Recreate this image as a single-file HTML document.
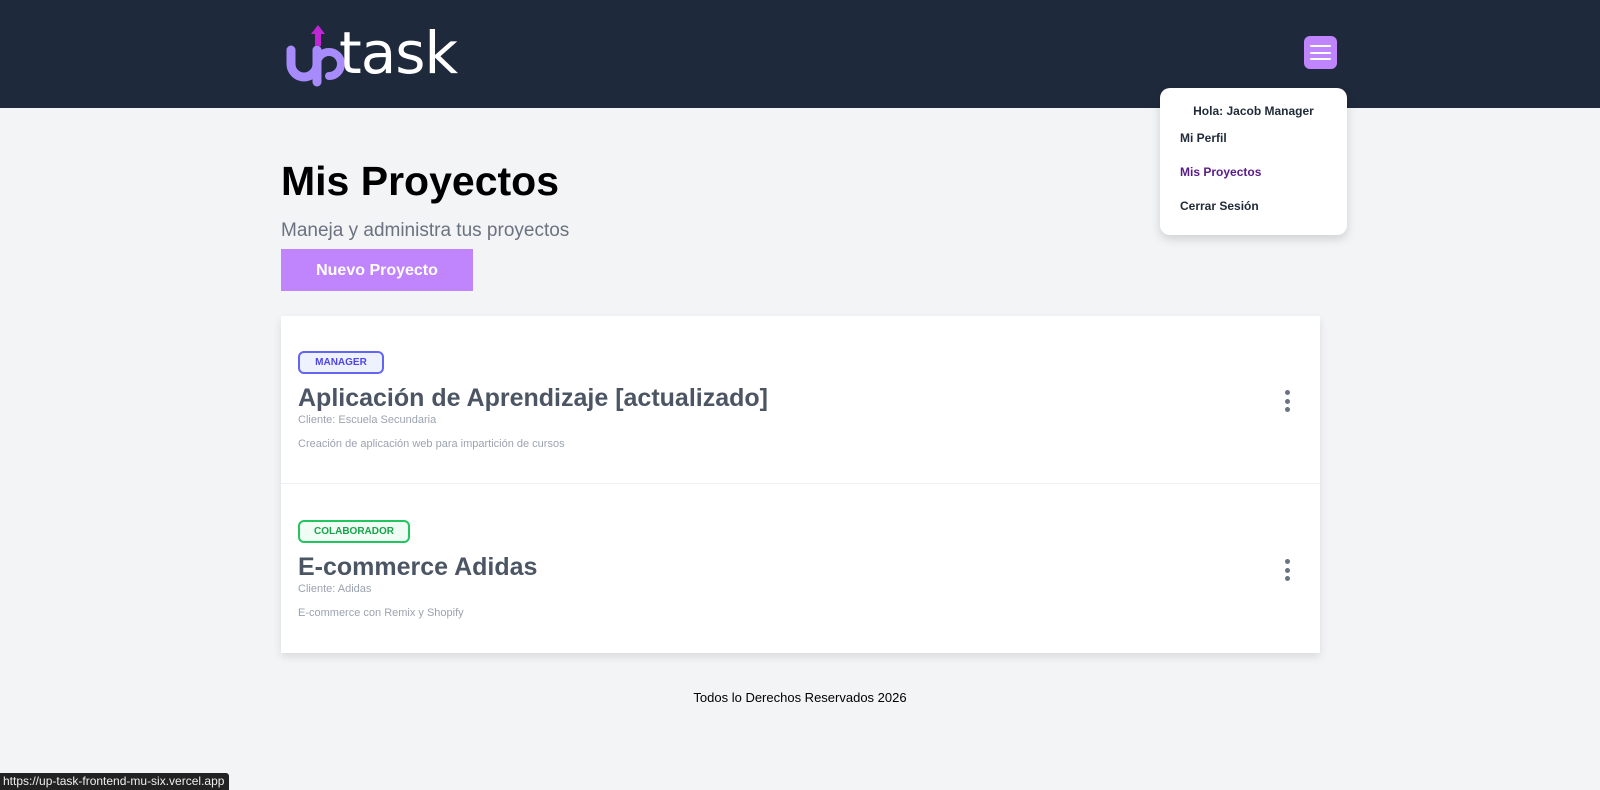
<!DOCTYPE html>
<html><head><meta charset="utf-8">
<style>
*{box-sizing:border-box;margin:0;padding:0}
body{width:1600px;height:790px;overflow:hidden;background:#f3f4f6;font-family:"Liberation Sans","DejaVu Sans",sans-serif;position:relative}
header{position:absolute;left:0;top:0;width:1600px;height:108px;background:#1e293b}
.logo{position:absolute;left:285px;top:22px}
.hb{position:absolute;left:1304px;top:36px;width:33px;height:33px;background:#c084fc;border-radius:6px}
.hb i{position:absolute;left:6px;width:21px;height:2px;background:#fff;border-radius:1px}
.menu{position:absolute;left:1160px;top:88px;width:187px;height:147px;background:#fff;border-radius:10px;box-shadow:0 4px 10px rgba(0,0,0,.15);font-size:12px;font-weight:bold;color:#1f2937}
.menu div{position:absolute;left:20px}
h1{position:absolute;left:281px;top:158px;font-size:41px;font-weight:900;color:#000;letter-spacing:0}
.sub{position:absolute;left:281px;top:220px;font-size:19px;font-weight:300;color:#6b7280}
.btn{position:absolute;left:281px;top:249px;width:192px;height:42px;background:#c084fc;color:#fff;font-weight:bold;font-size:16px;text-align:center;line-height:44px}
.card{position:absolute;left:281px;top:316px;width:1039px;height:337px;background:#fff;box-shadow:0 4px 8px rgba(0,0,0,.1)}
.item{position:absolute;left:0;width:1039px;height:168px}
.badge{position:absolute;left:17px;height:23px;border:2px solid;border-radius:6px;font-size:10px;font-weight:bold;text-align:center;line-height:19px}
.t{position:absolute;left:17px;font-size:25px;font-weight:bold;color:#4b5563}
.c{position:absolute;left:17px;font-size:11px;color:#9ca3af}
.d{position:absolute;left:17px;font-size:11px;color:#9ca3af}
.dots{position:absolute;left:1004px;width:6px}
.dots i{display:block;width:5px;height:5px;border-radius:50%;background:#6b7280;margin-bottom:3.5px}
.foot{position:absolute;left:0;width:1600px;top:690px;text-align:center;font-size:13px;color:#000}
.status{position:absolute;left:0;top:773px;width:229px;height:17px;background:#222;color:#eee;font-size:12px;line-height:17px;padding-left:3px;border-top-right-radius:3px}
</style></head><body>
<header>
<div class="logo">
<svg width="180" height="66" viewBox="0 0 180 66">
<path d="M6 28 V42 a13 13 0 0 0 26 0 V28" fill="none" stroke="#a78bfa" stroke-width="9" stroke-linecap="round"/>
<path d="M32 42 V60" stroke="#a78bfa" stroke-width="9" stroke-linecap="round"/>
<path d="M32 42 a12 12 0 1 1 12 12" fill="none" stroke="#a78bfa" stroke-width="8" stroke-linecap="round"/>
<path d="M26 12 L33 3 L40 12 H36 V24 H30 V12 Z" fill="#c026d3"/>
<text x="54" y="51" font-family="DejaVu Sans,sans-serif" font-size="58" fill="#fff" letter-spacing="-1">task</text>
</svg>
</div>
<div class="hb"><i style="top:9px"></i><i style="top:15.5px"></i><i style="top:22px"></i></div>
</header>
<div class="menu">
<div style="left:0;width:187px;text-align:center;top:16px">Hola: Jacob Manager</div>
<div style="top:43px">Mi Perfil</div>
<div style="top:77px;color:#581c87">Mis Proyectos</div>
<div style="top:111px">Cerrar Sesión</div>
</div>
<h1>Mis Proyectos</h1>
<div class="sub">Maneja y administra tus proyectos</div>
<div class="btn">Nuevo Proyecto</div>
<div class="card">
<div class="item" style="top:0;border-bottom:1px solid #f0f0f0">
<div class="badge" style="top:35px;width:86px;border-color:#6366f1;color:#4f46e5;background:#eef2ff">MANAGER</div>
<div class="t" style="top:68px">Aplicación de Aprendizaje [actualizado]</div>
<div class="c" style="top:98px">Cliente: Escuela Secundaria</div>
<div class="d" style="top:122px">Creación de aplicación web para impartición de cursos</div>
<div class="dots" style="top:74px"><i></i><i></i><i></i></div>
</div>
<div class="item" style="top:169px">
<div class="badge" style="top:35px;width:112px;border-color:#22c55e;color:#16a34a;background:#f0fdf4">COLABORADOR</div>
<div class="t" style="top:68px">E-commerce Adidas</div>
<div class="c" style="top:98px">Cliente: Adidas</div>
<div class="d" style="top:122px">E-commerce con Remix y Shopify</div>
<div class="dots" style="top:74px"><i></i><i></i><i></i></div>
</div>
</div>
<div class="foot">Todos lo Derechos Reservados 2026</div>
<div class="status">https://up-task-frontend-mu-six.vercel.app</div>
</body></html>
